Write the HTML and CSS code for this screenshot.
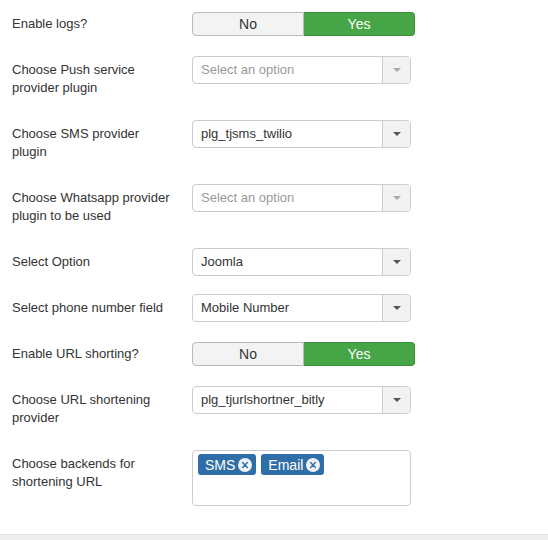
FILE: index.html
```html
<!DOCTYPE html>
<html>
<head>
<meta charset="utf-8">
<link rel="stylesheet" href="styles.css">
</head>
<body>
<div class="page">
  <div class="form">
    <div class="row">
      <div class="label">Enable logs?</div>
      <div class="controls"><div class="toggle"><span class="opt">No</span><span class="opt on">Yes</span></div></div>
    </div>
    <div class="row">
      <div class="label">Choose Push service provider plugin</div>
      <div class="controls"><div class="select placeholder"><span class="val">Select an option</span><span class="arrow"></span></div></div>
    </div>
    <div class="row">
      <div class="label">Choose SMS provider plugin</div>
      <div class="controls"><div class="select"><span class="val">plg_tjsms_twilio</span><span class="arrow"></span></div></div>
    </div>
    <div class="row">
      <div class="label">Choose Whatsapp provider plugin to be used</div>
      <div class="controls"><div class="select placeholder"><span class="val">Select an option</span><span class="arrow"></span></div></div>
    </div>
    <div class="row">
      <div class="label">Select Option</div>
      <div class="controls"><div class="select"><span class="val">Joomla</span><span class="arrow"></span></div></div>
    </div>
    <div class="row">
      <div class="label">Select phone number field</div>
      <div class="controls"><div class="select"><span class="val">Mobile Number</span><span class="arrow"></span></div></div>
    </div>
    <div class="row">
      <div class="label">Enable URL shorting?</div>
      <div class="controls"><div class="toggle"><span class="opt">No</span><span class="opt on">Yes</span></div></div>
    </div>
    <div class="row">
      <div class="label">Choose URL shortening provider</div>
      <div class="controls"><div class="select"><span class="val">plg_tjurlshortner_bitly</span><span class="arrow"></span></div></div>
    </div>
    <div class="row">
      <div class="label">Choose backends for shortening URL</div>
      <div class="controls">
        <div class="tags">
          <span class="tag">SMS<span class="x"><svg width="14" height="14" viewBox="0 0 14 14"><circle cx="7" cy="7" r="7" fill="#eef1f5"/><path d="M4.6 4.6L9.4 9.4M9.4 4.6L4.6 9.4" stroke="#2f6ea6" stroke-width="1.4" stroke-linecap="round"/></svg></span></span>
          <span class="tag">Email<span class="x"><svg width="14" height="14" viewBox="0 0 14 14"><circle cx="7" cy="7" r="7" fill="#eef1f5"/><path d="M4.6 4.6L9.4 9.4M9.4 4.6L4.6 9.4" stroke="#2f6ea6" stroke-width="1.4" stroke-linecap="round"/></svg></span></span>
        </div>
      </div>
    </div>
  </div>
  <div class="footer"></div>
</div>
</body>
</html>
```

FILE: styles.css
```css
html, body {
  margin: 0;
  padding: 0;
  background: #fff;
}
body {
  font-family: "Liberation Sans", Arial, sans-serif;
  font-size: 13px;
  line-height: 18px;
  color: #333;
}
.page {
  display: flex;
  flex-direction: column;
  min-height: 540px;
}
.form {
  padding: 10px 0 0 12px;
  flex: 1;
}
.row {
  display: flex;
  margin-bottom: 18px;
}
.label {
  width: 160px;
  padding: 5px 0;
  margin-right: 20px;
  color: #333;
}
.controls {
  flex: none;
}
.toggle {
  display: flex;
  margin-top: 2px;
  width: 223px;
  height: 24px;
}
.opt {
  flex: 1;
  display: flex;
  align-items: center;
  justify-content: center;
  box-sizing: border-box;
  height: 24px;
  font-size: 14px;
  background: #f3f3f3;
  border: 1px solid #b9b9b9;
  color: #333;
  border-radius: 4px 0 0 4px;
}
.opt.on {
  background: #46a546;
  border-color: #3b8f3b;
  color: #fff;
  border-radius: 0 4px 4px 0;
  border-left: none;
}
.select {
  display: flex;
  box-sizing: border-box;
  width: 219px;
  height: 28px;
  border: 1px solid #ccc;
  border-radius: 4px;
  background: #fff;
}
.val {
  flex: 1;
  padding-left: 8px;
  line-height: 26px;
  font-size: 13px;
  color: #333;
}
.placeholder .val {
  color: #999;
}
.arrow {
  width: 27px;
  border-left: 1px solid #ccc;
  background: #f2f2f2;
  border-radius: 0 3px 3px 0;
  display: flex;
  align-items: center;
  justify-content: center;
}
.arrow::after {
  content: "";
  border-left: 4px solid transparent;
  border-right: 4px solid transparent;
  border-top: 4px solid #555;
}
.placeholder .arrow::after {
  border-top-color: #aaa;
}
.tags {
  box-sizing: border-box;
  width: 219px;
  height: 56px;
  border: 1px solid #ccc;
  border-radius: 4px;
  padding: 3px 5px;
  display: flex;
  align-items: flex-start;
  gap: 5px;
}
.tag {
  display: inline-flex;
  align-items: center;
  height: 21px;
  padding: 0 4px 0 7px;
  background: #2f6ea6;
  color: #fff;
  font-size: 14px;
  border-radius: 3px;
}
.x {
  display: inline-flex;
  margin-left: 3px;
}
.footer {
  height: 5px;
  background: #eeeeee;
  border-top: 1px solid #e2e2e2;
}
```
